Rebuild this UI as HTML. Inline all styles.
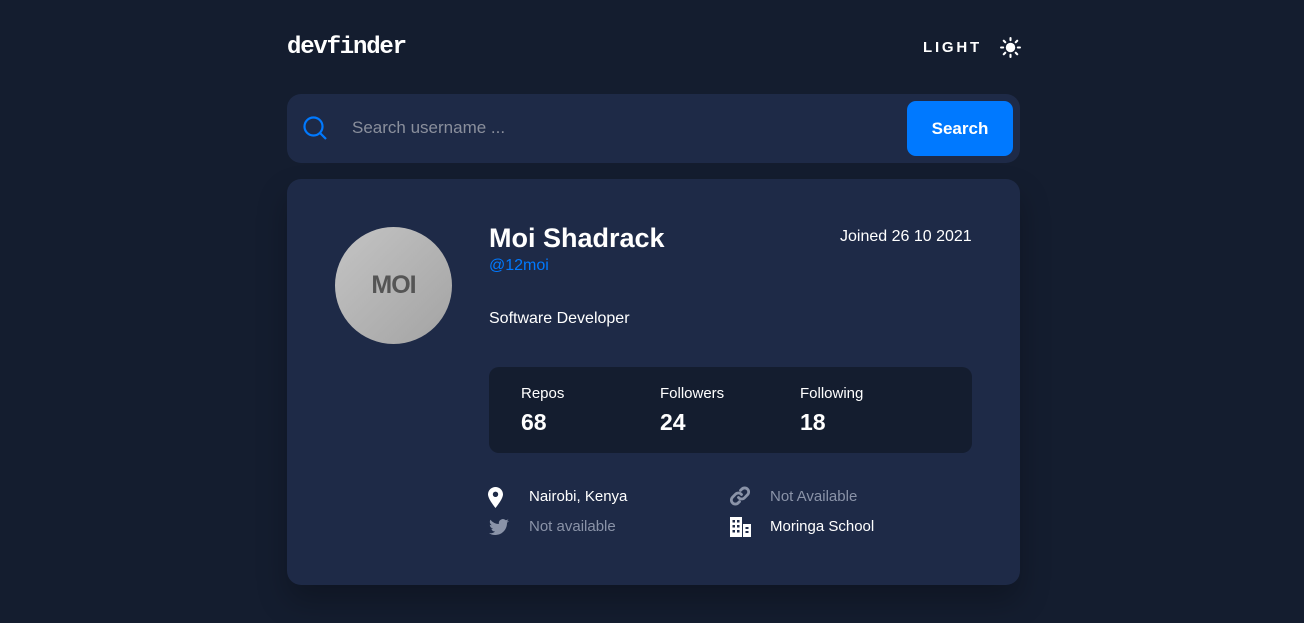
<!DOCTYPE html>
<html><head><style>
*{margin:0;padding:0;box-sizing:border-box}
body{width:1304px;height:623px;background:#141d2f;font-family:"Liberation Sans",sans-serif;color:#fff;position:relative;overflow:hidden}
.abs{position:absolute}
.logo{left:287px;top:34px;font-family:"Liberation Mono",monospace;font-weight:bold;font-size:24px;letter-spacing:-1.2px}
.light{left:923px;top:39px;font-size:15px;font-weight:bold;letter-spacing:2.8px}
.search{left:287px;top:94px;width:733px;height:69px;background:#1e2a47;border-radius:14px}
.btn{left:907px;top:101px;width:106px;height:55px;background:#0079ff;border-radius:9px;font-weight:bold;font-size:17px;text-align:center;line-height:55px}
.card{left:287px;top:179px;width:733px;height:406px;background:#1e2a47;border-radius:14px;box-shadow:0 16px 30px rgba(0,0,0,.25)}
.stats{left:489px;top:367px;width:483px;height:86px;background:#141d2f;border-radius:10px}
.lbl{font-size:15px;top:385px}
.num{font-size:23px;font-weight:bold;top:409px}
.info{font-size:15px}
.grey{color:#8a93a8}
</style></head><body>
<div class="abs logo">devfinder</div>
<div class="abs light">LIGHT</div>
<svg class="abs" style="left:1000px;top:37px" width="21" height="21" viewBox="0 0 20 20"><circle cx="10" cy="10" r="4.5" fill="#fff"/><g stroke="#fff" stroke-width="2" stroke-linecap="round"><path d="M10 1v2M10 17v2M1 10h2M17 10h2M3.6 3.6l1.4 1.4M15 15l1.4 1.4M3.6 16.4L5 15M15 5l1.4-1.4"/></g></svg>
<div class="abs search"></div>
<svg class="abs" style="left:303px;top:116px" width="25" height="25" viewBox="0 0 25 25"><circle cx="10.5" cy="10.5" r="9" fill="none" stroke="#0079ff" stroke-width="2.2"/><path d="M17 17l6 6" stroke="#0079ff" stroke-width="2.2"/></svg>
<div class="abs" style="left:352px;top:118px;font-size:17px;color:#8a8f9c">Search username ...</div>
<div class="abs btn">Search</div>
<div class="abs card"></div>
<div class="abs" style="left:335px;top:227px;width:117px;height:117px;border-radius:50%;background:linear-gradient(135deg,#c4c4c4,#a3a3a3)"></div>
<div class="abs" style="left:335px;top:271px;width:117px;text-align:center;font-family:'Liberation Sans',sans-serif;font-weight:bold;font-size:25px;color:#555;letter-spacing:-1px">MOI</div>
<div class="abs" style="left:489px;top:223px;font-size:27px;font-weight:bold">Moi Shadrack</div>
<div class="abs" style="left:489px;top:257px;font-size:16px;color:#0079ff">@12moi</div>
<div class="abs" style="left:840px;top:228px;font-size:16px">Joined 26 10 2021</div>
<div class="abs" style="left:489px;top:310px;font-size:16px">Software Developer</div>
<div class="abs stats"></div>
<div class="abs lbl" style="left:521px">Repos</div>
<div class="abs lbl" style="left:660px">Followers</div>
<div class="abs lbl" style="left:800px">Following</div>
<div class="abs num" style="left:521px">68</div>
<div class="abs num" style="left:660px">24</div>
<div class="abs num" style="left:800px">18</div>
<svg class="abs" style="left:488px;top:487px" width="15" height="21" viewBox="0 0 15 21"><path d="M7.5 0C3.4 0 0 3.3 0 7.4 0 12 7.5 21 7.5 21S15 12 15 7.4C15 3.3 11.6 0 7.5 0zm0 10a2.7 2.7 0 110-5.4 2.7 2.7 0 010 5.4z" fill="#fff"/></svg>
<div class="abs info" style="left:529px;top:488px">Nairobi, Kenya</div>
<svg class="abs" style="left:489px;top:519px" width="20" height="16" viewBox="0 0 20 16"><path d="M20 1.9a8 8 0 01-2.4.6A4 4 0 0019.4.3a8 8 0 01-2.6 1A4.1 4.1 0 009.9 5 11.6 11.6 0 011.4.7a4.1 4.1 0 001.3 5.5A4 4 0 01.8 5.7a4.1 4.1 0 003.3 4 4 4 0 01-1.8.1 4.1 4.1 0 003.8 2.8A8.2 8.2 0 010 14.2 11.6 11.6 0 006.3 16c7.5 0 11.7-6.3 11.7-11.7v-.5A8.3 8.3 0 0020 1.9z" fill="#8a93a8"/></svg>
<div class="abs info grey" style="left:529px;top:518px">Not available</div>
<svg class="abs" style="left:730px;top:486px" width="20" height="20" viewBox="0 0 20 20"><g fill="none" stroke="#8a93a8" stroke-width="2.8" stroke-linecap="round"><path d="M8.5 11.5a4 4 0 006 .3l3-3a4 4 0 00-5.7-5.7L10.5 4.4"/><path d="M11.5 8.5a4 4 0 00-6-.3l-3 3a4 4 0 005.7 5.7l1.3-1.3"/></g></svg>
<div class="abs info grey" style="left:770px;top:488px">Not Available</div>
<svg class="abs" style="left:730px;top:517px" width="21" height="20" viewBox="0 0 21 20"><path d="M0 0h12v20H0z" fill="#fff"/><path d="M13 7h8v13h-8z" fill="#fff"/><g fill="#1e2a47"><rect x="2.5" y="3" width="2.5" height="2.5"/><rect x="7" y="3" width="2.5" height="2.5"/><rect x="2.5" y="8" width="2.5" height="2.5"/><rect x="7" y="8" width="2.5" height="2.5"/><rect x="2.5" y="13" width="2.5" height="2.5"/><rect x="7" y="13" width="2.5" height="2.5"/><rect x="15.5" y="10" width="3" height="2"/><rect x="15.5" y="14" width="3" height="2"/></g></svg>
<div class="abs info" style="left:770px;top:518px">Moringa School</div>
</body></html>
